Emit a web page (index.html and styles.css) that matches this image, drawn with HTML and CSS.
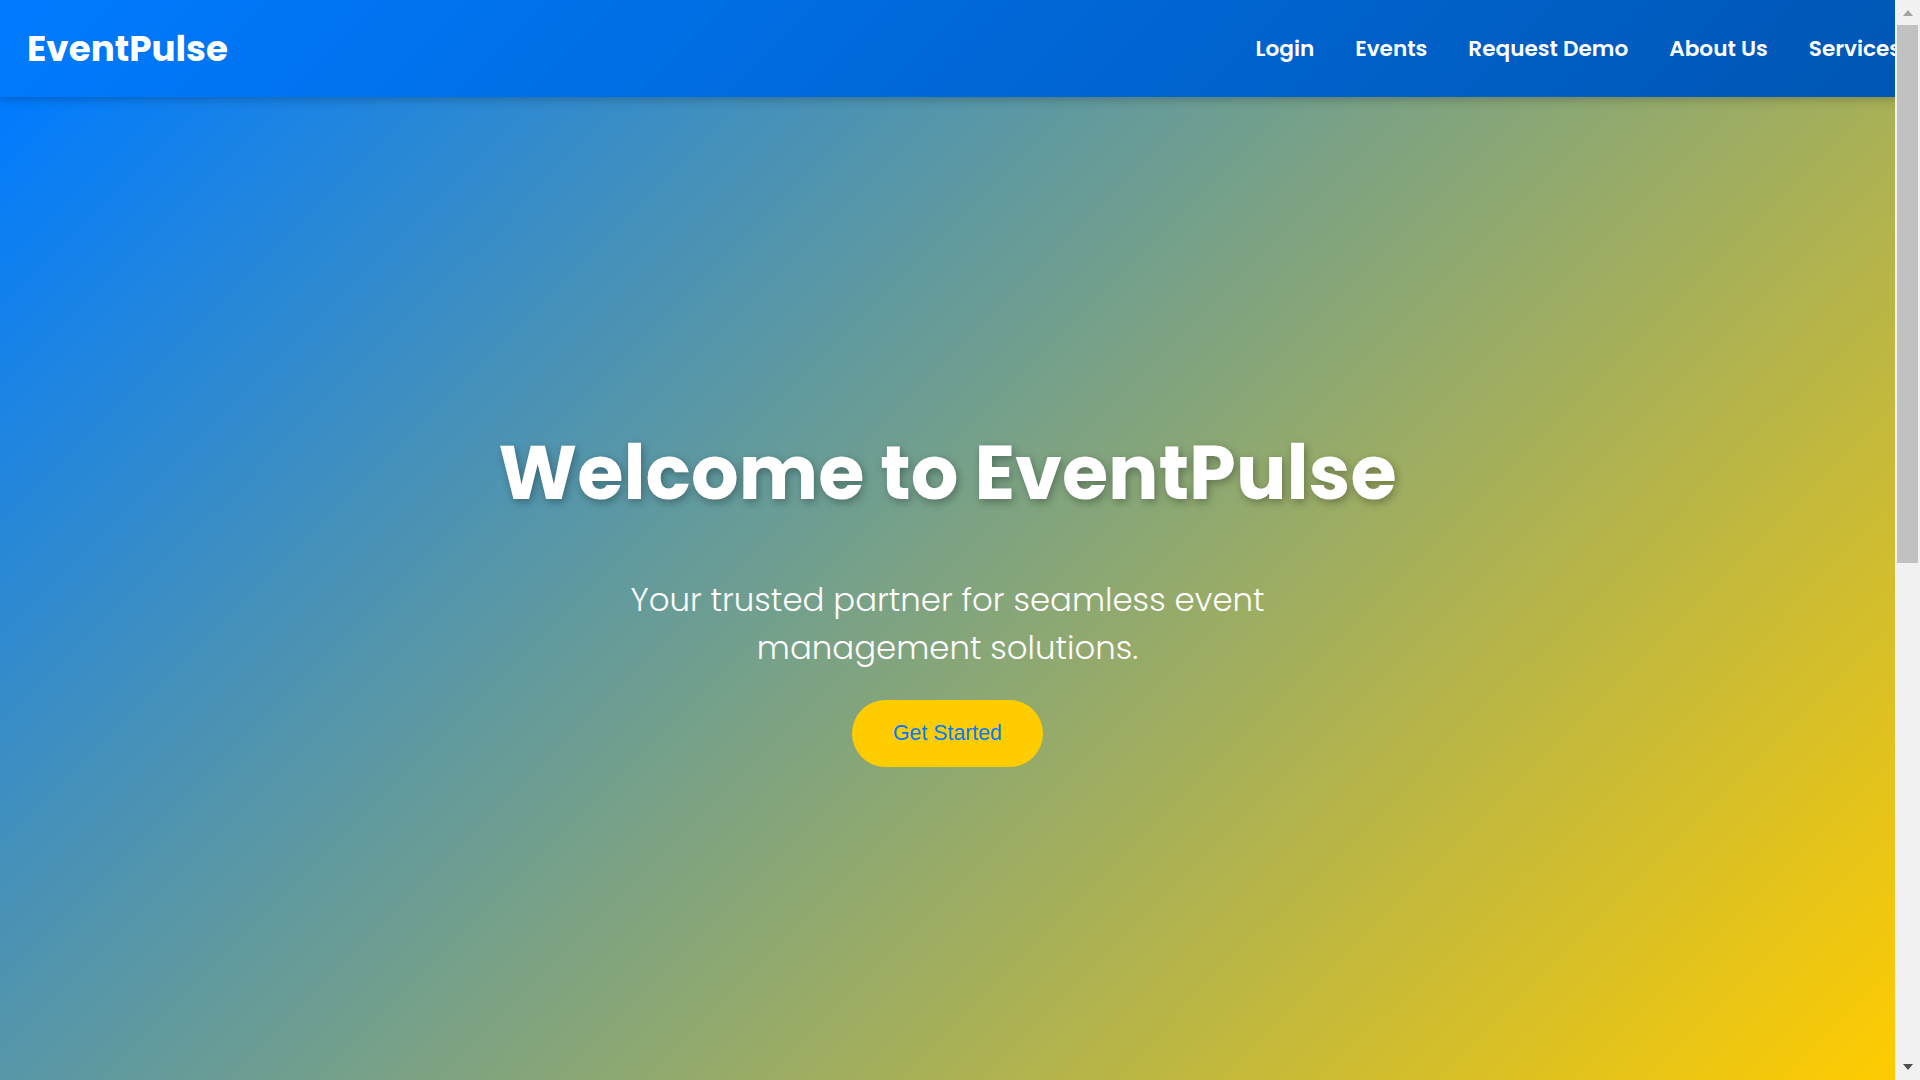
FILE: index.html
```html
<!DOCTYPE html>
<html lang="en">
<head>
<meta charset="UTF-8">
<title>EventPulse</title>
<link rel="stylesheet" href="styles.css">
</head>
<body>
<div class="page">
  <header class="site-header">
    <div class="logo">EventPulse</div>
    <nav class="main-nav">
      <a href="#" class="nav-link">Login</a>
      <a href="#" class="nav-link">Events</a>
      <a href="#" class="nav-link">Request Demo</a>
      <a href="#" class="nav-link">About Us</a>
      <a href="#" class="nav-link">Services</a>
    </nav>
  </header>
  <main>
    <section class="hero">
      <h1 class="hero-title">Welcome to EventPulse</h1>
      <p class="hero-sub">Your trusted partner for seamless event management solutions.</p>
      <a href="#" class="cta">Get Started</a>
    </section>
    <section class="below"></section>
  </main>
</div>
<div class="fake-scrollbar" aria-hidden="true">
  <span class="sb-arrow sb-up"></span>
  <span class="sb-thumb"></span>
  <span class="sb-arrow sb-down"></span>
</div>
</body>
</html>
```
FILE: styles.css
```css
* { box-sizing: border-box; }
html, body { margin: 0; padding: 0; }
body {
  font-family: "Poppins", "Inter", "Noto Sans", sans-serif;
  overflow-x: hidden;
  background: #ffffff;
}

.page {
  width: calc(100% - 25px);
  overflow: hidden;
}

.site-header {
  position: relative;
  z-index: 2;
  height: 97px;
  width: calc(100% + 6px);
  display: flex;
  justify-content: space-between;
  align-items: center;
  padding-left: 27px;
  background: linear-gradient(135deg, #007bff, #0056b3);
  box-shadow: 0 2px 10px rgba(0, 0, 0, 0.25);
}

.logo {
  color: #fff;
  font-weight: 700;
  font-size: 35.7px;
}

.main-nav {
  display: flex;
  gap: 41px;
}

.nav-link {
  color: #fff;
  text-decoration: none;
  font-weight: 600;
  font-size: 21.6px;
  white-space: nowrap;
}

.hero {
  height: calc(100vh - 97px);
  display: flex;
  flex-direction: column;
  align-items: center;
  padding-top: 331px;
  text-align: center;
  color: #fff;
  background: linear-gradient(135deg, #007bff, #ffcc00);
}

.hero-title {
  margin: 0 0 58px;
  font-size: 75px;
  line-height: 90px;
  font-weight: 700;
  text-shadow: 2px 3px 8px rgba(0, 0, 0, 0.3);
}

.hero-sub {
  margin: 0 0 28px;
  max-width: 720px;
  font-size: 32.4px;
  line-height: 48px;
  font-weight: 300;
}

.cta {
  display: inline-block;
  padding: 21px 41px;
  border-radius: 50px;
  background: #ffcc00;
  color: #007bff;
  text-decoration: none;
  font-family: "Liberation Sans", Arial, sans-serif;
  font-size: 21.3px;
  line-height: 24.5px;
}

.below {
  height: 988px;
  background: #ffffff;
}

/* drawn browser scrollbar, overlaying the right edge */
.fake-scrollbar {
  position: fixed;
  top: 0;
  right: 0;
  width: 25px;
  height: 100vh;
  background: #f1f1f1;
  display: flex;
  flex-direction: column;
  align-items: center;
}

.sb-arrow {
  width: 0;
  height: 0;
  border-left: 5.5px solid transparent;
  border-right: 5.5px solid transparent;
}

.sb-up {
  margin-top: 10px;
  border-bottom: 6px solid #a3a3a3;
}

.sb-thumb {
  margin-top: 9px;
  width: 21px;
  height: 538px;
  background: #c1c1c1;
}

.sb-down {
  margin-top: auto;
  margin-bottom: 10px;
  border-top: 6px solid #505050;
}
```
